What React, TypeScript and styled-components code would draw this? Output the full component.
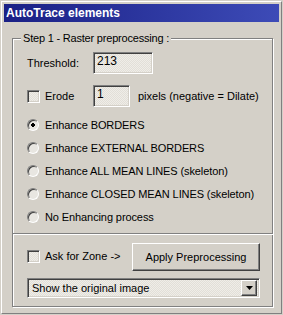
import React, { useState } from 'react';
import styled, { createGlobalStyle, css } from 'styled-components';

const GlobalStyle = createGlobalStyle`
	html, body {
		margin: 0;
		padding: 0;
		background: #d4d0c8;
	}
	body {
		font-family: 'Liberation Sans', Arial, sans-serif;
		font-size: 11px;
		color: #000;
	}
`;

const sunken = css`
	border: 1px solid;
	border-color: #808080 #fff #fff #808080;
	box-shadow: inset 1px 1px 0 #404040, inset -1px -1px 0 #d4d0c8;
	background: repeating-conic-gradient(#efede8 0 25%, #e2dfd8 0 50%) 0 0 / 2px 2px;
`;

const raised = css`
	border: 1px solid;
	border-color: #fff #404040 #404040 #fff;
	box-shadow: inset -1px -1px 0 #808080;
	background: #d4d0c8;
`;

const options = [
	'Enhance BORDERS',
	'Enhance EXTERNAL BORDERS',
	'Enhance ALL MEAN LINES (skeleton)',
	'Enhance CLOSED MEAN LINES (skeleton)',
	'No Enhancing process',
];

const App = () => {
	const [mode, setMode] = useState(0);
	const [erode, setErode] = useState(false);
	const [askZone, setAskZone] = useState(false);

	return (
		<>
			<GlobalStyle />
			<Window>
				<Frame>
					<TitleBar>AutoTrace elements</TitleBar>
					<Body>
						<GroupBox>
							<GroupLabel>Step 1 - Raster preprocessing :</GroupLabel>
							<FieldRow>
								<FieldLabel>Threshold:</FieldLabel>
								<TextField width={60}>213</TextField>
							</FieldRow>
							<FieldRow $gap={11}>
								<CheckLabel onClick={() => setErode(!erode)}>
									<CheckBox $checked={erode} />
									Erode
								</CheckLabel>
								<TextField width={37}>1</TextField>
								<Hint>pixels (negative = Dilate)</Hint>
							</FieldRow>
							<RadioList>
								{options.map((label, i) => (
									<RadioRow key={label} onClick={() => setMode(i)}>
										<Radio $checked={mode === i} />
										{label}
									</RadioRow>
								))}
							</RadioList>
						</GroupBox>
						<ActionBox>
							<ActionRow>
								<CheckLabel onClick={() => setAskZone(!askZone)}>
									<CheckBox $checked={askZone} />
									Ask for Zone -&gt;
								</CheckLabel>
								<Button>Apply Preprocessing</Button>
							</ActionRow>
							<Combo>
								<ComboValue>Show the original image</ComboValue>
								<ComboArrow>
									<svg width="7" height="4" viewBox="0 0 7 4">
										<path d="M0 0h7L3.5 4z" fill="#000" />
									</svg>
								</ComboArrow>
							</Combo>
						</ActionBox>
					</Body>
				</Frame>
			</Window>
		</>
	);
};
export default App;

const Window = styled.div`
	box-sizing: border-box;
	width: 283px;
	height: 315px;
	padding: 1px;
	background: #d4d0c8;
`;

const Frame = styled.div`
	box-sizing: border-box;
	height: 100%;
	padding: 2px;
	border: 1px solid;
	border-color: #fff #808080 #808080 #fff;
	display: flex;
	flex-direction: column;
`;

const TitleBar = styled.div`
	height: 18px;
	display: flex;
	align-items: center;
	padding-left: 2px;
	background: linear-gradient(to right, #1a2085, #3d4bb7);
	color: #fff;
	font-weight: bold;
	font-size: 12px;
`;

const Body = styled.div`
	padding: 16px 6px 0 8px;
	display: flex;
	flex-direction: column;
`;

const GroupBox = styled.div`
	position: relative;
	height: 196px;
	box-sizing: border-box;
	border: 1px solid #808080;
	box-shadow: inset 1px 1px 0 #fff, 1px 1px 0 #fff;
	padding: 13px 0 0 14px;
	display: flex;
	flex-direction: column;
`;

const GroupLabel = styled.span`
	position: absolute;
	top: -8px;
	left: 8px;
	padding: 0 2px;
	line-height: 14px;
	letter-spacing: -0.2px;
	background: #d4d0c8;
`;

const FieldRow = styled.div<{ $gap?: number }>`
	display: flex;
	align-items: center;
	height: 22px;
	margin-top: ${(p) => p.$gap ?? 0}px;
`;

const FieldLabel = styled.span`
	width: 66px;
`;

const TextField = styled.div<{ width: number }>`
	${sunken};
	box-sizing: border-box;
	width: ${(p) => p.width}px;
	height: 22px;
	padding: 1px 3px 0;
	line-height: 14px;
	font-size: 12px;
`;

const CheckLabel = styled.label`
	display: flex;
	align-items: center;
	gap: 5px;
	width: 66px;
	white-space: nowrap;
	cursor: default;
`;

const CheckBox = styled.span<{ $checked: boolean }>`
	${sunken};
	box-sizing: border-box;
	width: 13px;
	height: 13px;
	flex: none;
	display: flex;
	align-items: center;
	justify-content: center;
	&::after {
		content: ${(p) => (p.$checked ? "'\\2713'" : 'none')};
		font-size: 10px;
		font-weight: bold;
		line-height: 1;
	}
`;

const Hint = styled.span`
	margin-left: 8px;
	white-space: nowrap;
`;

const RadioList = styled.div`
	margin-top: 6px;
	display: flex;
	flex-direction: column;
`;

const RadioRow = styled.label`
	display: flex;
	align-items: center;
	gap: 6px;
	height: 23px;
	white-space: nowrap;
	letter-spacing: -0.1px;
	cursor: default;
`;

const Radio = styled.span<{ $checked: boolean }>`
	box-sizing: border-box;
	width: 12px;
	height: 12px;
	flex: none;
	border-radius: 50%;
	border: 1px solid;
	border-color: #808080 #fff #fff #808080;
	box-shadow: inset 1px 1px 0 #404040;
	background: radial-gradient(circle, ${(p) => (p.$checked ? '#000 0 2px' : '#e8e6e1 0 2px')}, #e8e6e1 2px);
`;

const ActionBox = styled.div`
	height: 73px;
	box-sizing: border-box;
	border: 1px solid #808080;
	border-top: none;
	box-shadow: inset 1px 0 0 #fff, 1px 1px 0 #fff;
	padding: 8px 12px 0 14px;
	display: flex;
	flex-direction: column;
	gap: 8px;
`;

const ActionRow = styled.div`
	display: flex;
	align-items: center;
	justify-content: space-between;
	height: 28px;
`;

const Button = styled.button`
	${raised};
	box-sizing: border-box;
	width: 128px;
	height: 28px;
	margin-top: 1px;
	padding: 0;
	font: inherit;
	font-size: 11px;
	color: #000;
`;

const Combo = styled.div`
	${sunken};
	box-sizing: border-box;
	height: 20px;
	display: flex;
	align-items: center;
	padding: 2px;
`;

const ComboValue = styled.span`
	flex: 1;
	padding-left: 2px;
	font-size: 11px;
`;

const ComboArrow = styled.span`
	${raised};
	box-sizing: border-box;
	width: 16px;
	height: 16px;
	display: flex;
	align-items: center;
	justify-content: center;
`;
